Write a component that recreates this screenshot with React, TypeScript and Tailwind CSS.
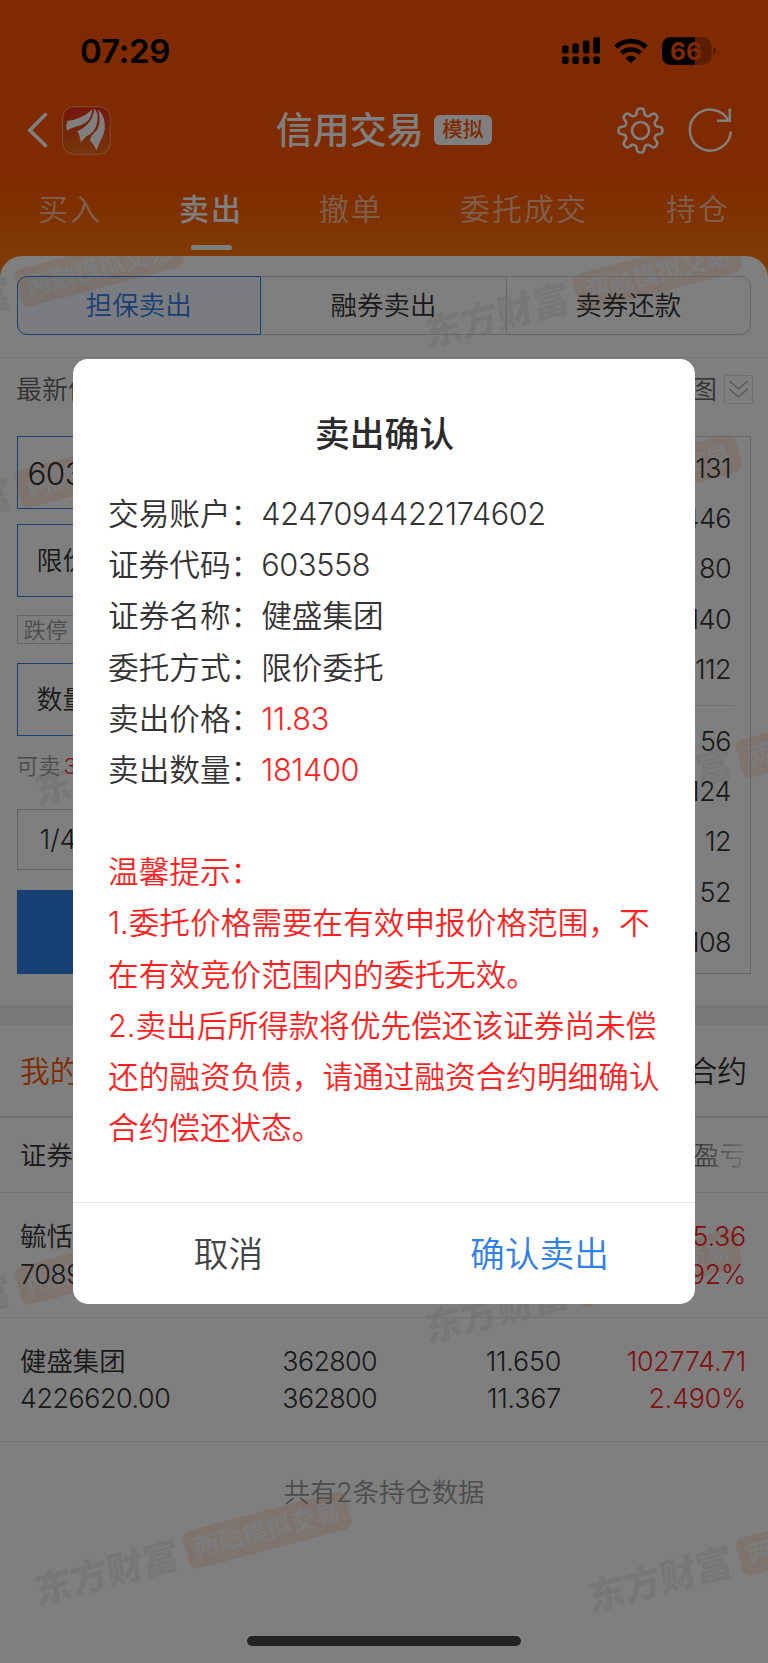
import React from "react";

const num = "tracking-[-0.6px]";

function gearPath(cx: number, cy: number): string {
  const pts: string[] = [];
  for (let i = 0; i < 240; i++) {
    const t = (i / 240) * Math.PI * 2;
    const r = 18.9 + 3.2 * Math.tanh(1.9 * Math.cos(8 * t));
    pts.push(`${(cx + r * Math.cos(t)).toFixed(2)} ${(cy + r * Math.sin(t)).toFixed(2)}`);
  }
  return `M${pts.join("L")}Z`;
}

function StatusBar() {
  return (
    <div className="flex h-[102px] items-center justify-between pl-[80px] pr-[51px]">
      <span className="pt-[1px] text-[33px] font-semibold leading-none tracking-[-0.2px] text-black">07:29</span>
      <div className="flex items-center">
        <svg className="h-[28px] w-[39px]" viewBox="0 0 39 28" fill="#000">
          <rect x="0" y="8.5" width="6.6" height="8" rx="2" />
          <rect x="10.3" y="6.6" width="6.6" height="9.9" rx="2" />
          <rect x="20.8" y="3.6" width="6.6" height="12.9" rx="2" />
          <rect x="31.2" y="0" width="6.8" height="16.5" rx="2" />
          <rect x="0" y="19.5" width="6.6" height="7.5" rx="2" />
          <rect x="10.3" y="19.5" width="6.6" height="7.5" rx="2" />
          <rect x="20.8" y="19.5" width="6.6" height="7.5" rx="2" />
          <rect x="31.2" y="19.5" width="6.8" height="7.5" rx="2" />
        </svg>
        <svg className="ml-[13px] h-[26px] w-[34px]" viewBox="0 0 34 26" fill="none" stroke="#000">
          <path d="M2 9.3A21.5 21.5 0 0 1 32 9.3" strokeWidth="4.8" />
          <path d="M7.6 15.2A13.6 13.6 0 0 1 26.4 15.2" strokeWidth="4.6" />
          <path d="M17 25.3L11.6 19.9A7.8 7.8 0 0 1 22.4 19.9Z" fill="#000" stroke="none" />
        </svg>
        <svg className="ml-[14px] h-[28px] w-[55px]" viewBox="0 0 55 28">
          <rect x="0" y="0.3" width="49.5" height="27.4" rx="8" fill="#000" fillOpacity="0.28" />
          <path d="M8 0.3H33V27.7H8A8 8 0 0 1 0 19.7V8.3A8 8 0 0 1 8 0.3Z" fill="#000" />
          <path d="M51 10Q54.5 11.5 54.5 14T51 18.2Z" fill="#000" fillOpacity="0.28" />
          <text x="24" y="23" textAnchor="middle" fontFamily="Inter" fontWeight="700" fontSize="24.5" fill="#ff5400">66</text>
        </svg>
      </div>
    </div>
  );
}

function TitleBar() {
  return (
    <div className="flex h-[56px] items-center pl-[27px] pr-[34px]">
      <svg className="h-[36px] w-[22px]" viewBox="0 0 22 36" fill="none" stroke="#fff" strokeWidth="3.6">
        <path d="M19.5 1.5L2.8 18.2L19.5 34.5" strokeLinejoin="miter" />
      </svg>
      <svg className="ml-[13px] h-[49px] w-[49px]" viewBox="185.5 317.5 147 147">
        <defs>
          <linearGradient id="logo" x1="0" y1="0" x2="0" y2="1">
            <stop offset="0" stopColor="#ea2c18" />
            <stop offset="1" stopColor="#ee6c12" />
          </linearGradient>
        </defs>
        <rect x="187.5" y="319.5" width="143" height="143" rx="33" fill="url(#logo)" stroke="#ffa577" strokeWidth="3" />
        <g fill="#fff">
          <path d="M201 392L198 375L202 362Q246 357 277 327Q274 365 240 376Q215 381 201 392Z" />
          <path d="M231 393Q278 373 283 325Q296 338 292 364Q286 397 259 408L242 427Q240 406 231 393Z" />
          <path d="M294 328Q318 350 314 387Q310 410 300 425L289 451Q281 431 269 420Q271 408 283 398Q307 376 294 328Z" />
        </g>
      </svg>
      <div className="ml-[165px] flex w-[341px] items-center">
        <h1 className="whitespace-nowrap text-[37px] font-medium leading-none text-white">信用交易</h1>
        <span className="ml-[10px] flex h-[30px] w-[58px] items-center justify-center rounded-[6px] bg-white text-[20.5px] font-medium leading-none text-[#ff5400]">模拟</span>
      </div>
      <svg className="h-[48px] w-[48px] shrink-0" viewBox="0 0 48 48" fill="none" stroke="#fff" strokeWidth="2.6">
        <path d={gearPath(24.5, 24.5)} strokeLinejoin="round" />
        <circle cx="24.5" cy="24.5" r="8.5" />
      </svg>
      <svg className="ml-[22px] h-[48px] w-[48px] shrink-0" viewBox="0 0 48 48" fill="none" stroke="#fff" strokeWidth="2.5">
        <path d="M44.8 25.5A20.5 20.5 0 1 1 42.9 15.4" />
        <path d="M43.8 2.5V14.7H31" />
      </svg>
    </div>
  );
}

function NavTabs() {
  return (
    <nav className="flex h-[98px] justify-between pl-[38px] pr-[38px] pt-[34px] text-[30px] leading-[34px] tracking-[2px] text-white/60">
      <span>买入</span>
      <span className="ml-[13px] flex flex-col items-center font-medium text-white">
        卖出
        <i className="mt-[19px] block h-[5px] w-[41px] rounded-full bg-white" />
      </span>
      <span className="ml-[12px]">撤单</span>
      <span className="ml-[13px]">委托成交</span>
      <span className="ml-[14px]">持仓</span>
    </nav>
  );
}

const marks: Array<[number, number]> = [
  [-116, 327], [442, 332], [-116, 528], [442, 532], [52, 789], [605, 798],
  [-116, 1325], [442, 1327], [52, 1589], [605, 1596],
];

function Watermarks() {
  return (
    <div className="pointer-events-none absolute inset-0 overflow-hidden">
      {marks.map(([x, y]) => (
        <div
          key={`${x}-${y}`}
          className="absolute flex w-[324px] -translate-x-1/2 -translate-y-1/2 rotate-[-14.8deg] items-center justify-between whitespace-nowrap"
          style={{ left: x + 140, top: y - 39 - 256 }}
        >
          <span className="-skew-x-6 text-[37px] font-black leading-none text-black/[0.08]">东方财富</span>
          <span className="flex h-[39px] w-[168px] items-center justify-center rounded-[8px] bg-[#ff5a1e]/[0.15] text-[25px] font-medium leading-none text-[#f6f8fa]">两融模拟交易</span>
        </div>
      ))}
    </div>
  );
}

function Segments() {
  return (
    <div className="pl-[16.5px] pr-[17.5px] pb-[22px] pt-[20px]">
      <div className="flex h-[59px] text-[26.5px] text-[#333]">
        <div className="flex w-[244.5px] items-center justify-center rounded-l-[10px] border border-[#2f80e8] bg-[#2f80e8]/[0.05] text-[#2f80e8]">担保卖出</div>
        <div className="flex w-[245px] items-center justify-center border-y border-[#d0d0d4]">融券卖出</div>
        <div className="flex flex-1 items-center justify-center rounded-r-[10px] border border-[#d0d0d4]">卖券还款</div>
      </div>
    </div>
  );
}

const asks = ["131", "446", "80", "140", "112"];
const bids = ["56", "124", "12", "52", "108"];

function OrderPanel() {
  return (
    <div className="flex gap-[24px] pl-[16.5px] pr-[17px] pt-[15px] text-[26px] text-[#333]">
      <div className="flex w-[395px] flex-col">
        <div className={`flex h-[73px] items-center border border-[#2f80e8] pl-[10px] pt-[2px] text-[31.5px] ${num}`}>603558</div>
        <div className="mt-[15px] flex h-[73px] items-center border border-[#2f80e8] pl-[19px]">限价委托</div>
        <div className="mt-[18px] flex h-[29px] w-[190px] items-center border border-[#c8c8c8] pl-[6px] text-[22px] leading-none text-[#999]">跌停 10.49</div>
        <div className="mt-[19px] flex h-[73px] items-center border border-[#2f80e8] pl-[19px]">数量</div>
        <div className="flex h-[73px] items-start pt-[17px] text-[22px] leading-[26px] text-[#999]">
          可卖<span className="ml-[3px] text-[#f22]">362800</span>
        </div>
        <div className="flex h-[61px] w-[90px] items-center border border-[#c8c8c8] pl-[22px] pt-[2px] text-[27px]">1/4</div>
        <div className="mt-[20px] h-[84px] bg-[#2f80e8]" />
      </div>
      <div className="flex h-[538px] flex-1 flex-col border border-[#cdcdcf] pl-[15px] pr-[15px] pt-[7px] text-right text-[27px]">
        {asks.map((v) => (
          <div key={v} className={`h-[50.2px] pr-[4px] leading-[50.2px] ${num}`}>{v}</div>
        ))}
        <div className="mb-[11px] mt-[10px] border-t border-[#e2e2e2]" />
        {bids.map((v) => (
          <div key={v} className={`h-[50.2px] pr-[4px] leading-[50.2px] ${num}`}>{v}</div>
        ))}
      </div>
    </div>
  );
}

type Row = { name: string; value: string; qty: string; free: string; price: string; cost: string; gain: string; pct: string };

const rows: Row[] = [
  { name: "毓恬冠佳", value: "708900.00", qty: "17000", free: "17000", price: "41.700", cost: "40.520", gain: "20065.36", pct: "2.992%" },
  { name: "健盛集团", value: "4226620.00", qty: "362800", free: "362800", price: "11.650", cost: "11.367", gain: "102774.71", pct: "2.490%" },
];

function Holdings() {
  return (
    <div className="text-[#333]">
      <div className="mt-[31px] h-[20px] bg-[#f1f1f1]" />
      <div className="flex h-[93px] items-center justify-between border-b-2 border-[#dedede] pl-[20px] pr-[21px] pt-[2px] text-[29.7px]">
        <span className="text-[#ff5a00]">我的持仓</span>
        <span>融资合约</span>
      </div>
      <div className="flex h-[75px] items-center justify-between border-b border-[#e6e6e6] pl-[20px] pr-[22px] pt-[2px] text-[26.4px]">
        <span>证券/市值</span>
        <span className="bg-gradient-to-r from-[#666] from-50% to-[#e8e8e8] bg-clip-text text-transparent">持仓盈亏</span>
      </div>
      {rows.map((r) => (
        <div key={r.name} className="grid h-[124.5px] grid-cols-[176px_181px_184px_185px] border-b border-[#e6e6e6] pl-[20px] pt-[25px] text-right text-[26.8px] leading-[37.5px]">
          <div className="whitespace-nowrap text-left">
            <div className="text-[26.4px]">{r.name}</div>
            <div className="tracking-[-0.4px]">{r.value}</div>
          </div>
          <div className="tracking-[-0.6px]"><div>{r.qty}</div><div>{r.free}</div></div>
          <div className="tracking-[-0.2px]"><div>{r.price}</div><div>{r.cost}</div></div>
          <div className="tracking-[-0.2px] text-[#f22]"><div>{r.gain}</div><div>{r.pct}</div></div>
        </div>
      ))}
      <p className="mt-[31px] text-center text-[26.4px] leading-[38px] text-[#999]">共有2条持仓数据</p>
    </div>
  );
}

const fields: Array<[string, string, string]> = [
  ["交易账户：", "4247094422174602", ""],
  ["证券代码：", "603558", ""],
  ["证券名称：", "健盛集团", ""],
  ["委托方式：", "限价委托", ""],
  ["卖出价格：", "11.83", "text-[#ff1f1f]"],
  ["卖出数量：", "181400", "text-[#ff1f1f]"],
];

const tips = [
  "温馨提示：",
  "1.委托价格需要在有效申报价格范围，不",
  "在有效竞价范围内的委托无效。",
  "2.卖出后所得款将优先偿还该证券尚未偿",
  "还的融资负债，请通过融资合约明细确认",
  "合约偿还状态。",
];

function ConfirmDialog() {
  return (
    <div className="absolute inset-0 bg-black/50 pl-[73px] pt-[358.5px]">
      <div className="flex h-[945px] w-[622px] flex-col rounded-[15px] bg-white">
        <h2 className="mt-[50px] pl-[1px] text-center text-[34.8px] font-medium leading-[50px] text-[#2b2b2b]">卖出确认</h2>
        <div className="mt-[29.5px] flex-1 whitespace-nowrap pl-[35px] text-[30.65px] leading-[51.2px] text-[#333]">
          {fields.map(([label, value, tone]) => (
            <div key={label} className="flex">
              <span>{label}</span>
              <span className={`${tone} ${/^\d/.test(value) ? "tracking-[-0.33px]" : ""}`}>{value}</span>
            </div>
          ))}
          <div className="mt-[51px] text-[#ff1f1f]">
            {tips.map((t) => (
              <div key={t}>{t}</div>
            ))}
          </div>
        </div>
        <div className="flex h-[102px] border-t border-[#e8e8e8] pt-[3px] text-[34.7px]">
          <button className="flex-1 text-[#444]">取消</button>
          <button className="flex-1 text-[#2f80e8]">确认卖出</button>
        </div>
      </div>
    </div>
  );
}

export default function App() {
  return (
    <div className="relative flex h-[1663px] w-[768px] flex-col overflow-hidden bg-[linear-gradient(#ff5400_0px,#ff5400_172px,#ff7a10_270px)] font-['Inter','Noto_Sans_CJK_SC',sans-serif] font-[350]">
      <StatusBar />
      <TitleBar />
      <NavTabs />
      <main className="relative flex flex-1 flex-col overflow-hidden rounded-t-[22px] bg-white">
        <Watermarks />
        <div className="relative flex flex-1 flex-col">
          <Segments />
          <div className="flex h-[64px] items-center border-t border-[#e6e6e6] pl-[16px] pr-[15px] text-[26px] text-[#666]">
            <span>最新价</span>
            <span className="ml-auto">分时图</span>
            <svg className="ml-[7px] h-[29px] w-[29px]" viewBox="0 0 29 29" fill="none">
              <rect x="0.5" y="0.5" width="28" height="28" rx="1" stroke="#dedede" />
              <path d="M5.5 6L14.5 14L23.5 6M5.5 14L14.5 22L23.5 14" stroke="#b4b4b4" strokeWidth="1.6" />
            </svg>
          </div>
          <OrderPanel />
          <Holdings />
          <div className="mx-auto mb-[17px] mt-auto h-[10px] w-[274px] rounded-full bg-[#444]" />
        </div>
      </main>
      <ConfirmDialog />
    </div>
  );
}
